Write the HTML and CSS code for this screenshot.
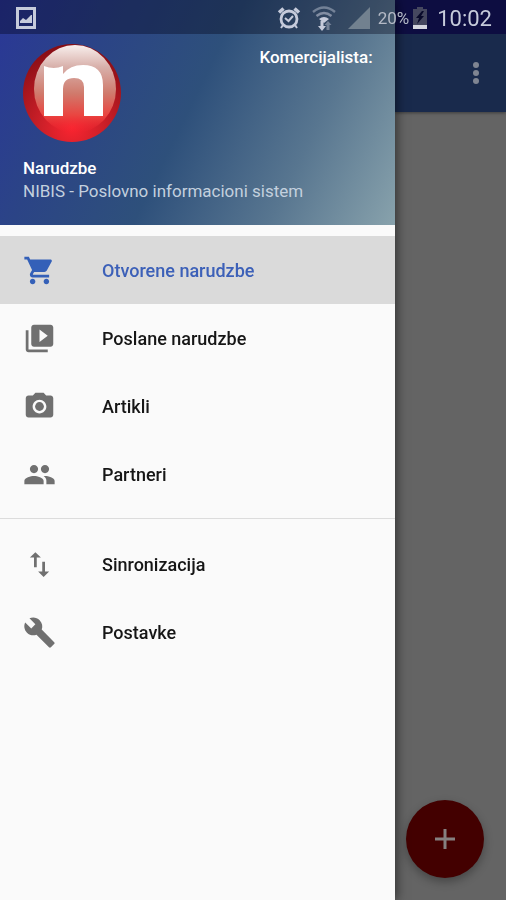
FILE: index.html
```html
<!DOCTYPE html>
<html lang="bs">
<head>
<meta charset="utf-8">
<meta name="viewport" content="width=device-width, initial-scale=1">
<title>Narudzbe</title>
<link rel="stylesheet" href="styles.css">
</head>
<body>
<div class="screen">
  <div class="status">
    <svg class="status-picture" viewBox="0 0 20 22" aria-hidden="true"><path fill="none" stroke="currentColor" stroke-width="3" d="M1.5 1.5h17v19h-17z"/><path fill="currentColor" d="M4 16v-2l3-3 3 2 5-5h1v8z"/></svg>
    <div class="status-right">
      <svg class="status-alarm" viewBox="0 0 24 24" aria-hidden="true"><g fill="none" stroke="currentColor"><circle cx="12" cy="13" r="8" stroke-width="2.800"/><path stroke-width="3.500" d="M2 6.500l4.500-4M22 6.500l-4.500-4"/><path stroke-width="2" d="M8 12l3.500 3 4.500-5M6 19l-2 3M18 19l2 3"/></g></svg>
      <svg class="status-wifi" viewBox="0 0 24 26" aria-hidden="true"><g fill="none" stroke="currentColor" stroke-width="2.400"><path opacity=".45" d="M1 7q11-9 22 0"/><path opacity=".55" d="M4.500 11q7.500-6 15 0"/></g><path fill="currentColor" d="M7 14q5-4 10 0l-5 4z"/><path fill="currentColor" d="M8.500 16h3v5h2.500l-4 5-4-5h2.500z"/><path fill="currentColor" opacity=".45" d="M14.500 25h3v-5h2l-3.500-4-3.500 4h2z"/></svg>
      <svg class="status-signal" viewBox="0 0 22 22" aria-hidden="true"><path fill="currentColor" d="M22 0v22H0z"/></svg>
      <span class="status-percent">20%</span>
      <svg class="status-battery" viewBox="0 0 16 22" aria-hidden="true"><path fill="#45475f" d="M5 0h6v2h4v16H1V2h4z"/><path fill="#d4d5df" d="M1 18h14v4H1z"/><path fill="#08092a" d="M10 4l-6 7h3l-2 6 7-8H9l3-5z"/></svg>
      <span class="status-time">10:02</span>
    </div>
  </div>

  <aside class="drawer">
    <header class="head">
      <div class="head-top">
        <svg class="logo" viewBox="0 0 100 100" role="img" aria-label="n">
          <defs>
            <radialGradient id="ball" cx=".5" cy=".85" r=".85"><stop offset="0" stop-color="#fa2430"/><stop offset=".35" stop-color="#cf2029"/><stop offset="1" stop-color="#850d14"/></radialGradient>
            <linearGradient id="shine" x1="0" y1="0" x2="0" y2="1"><stop offset="0" stop-color="#f8efed"/><stop offset=".25" stop-color="#d8b0aa"/><stop offset=".55" stop-color="#d07a6c"/><stop offset=".8" stop-color="#ea4440"/><stop offset="1" stop-color="#fa2430" stop-opacity="0"/></linearGradient>
          </defs>
          <circle cx="50" cy="50" r="49" fill="url(#ball)"/>
          <ellipse cx="53" cy="46" rx="41" ry="44" fill="url(#shine)"/>
          <path fill="#fff" d="M22 23q10 4 19 0v8q7-9 20-9 20 0 20 20v31H62V44q0-9-10-9-11 0-11 11v27H22z"/>
        </svg>
        <span class="agent">Komercijalista:</span>
      </div>
      <h1 class="title">Narudzbe</h1>
      <p class="subtitle">NIBIS - Poslovno informacioni sistem</p>
    </header>
    <nav class="menu">
      <div class="group">
        <a class="item active" href="#open" aria-current="page"><svg class="icon" viewBox="0 0 24 24" aria-hidden="true"><path d="M7 18c-1.100 0-1.990.9-1.990 2S5.900 22 7 22s2-.9 2-2-.9-2-2-2zM1 2v2h2l3.600 7.590-1.350 2.450c-.16.28-.25.61-.25.96 0 1.100.9 2 2 2h12v-2H7.420c-.14 0-.25-.11-.25-.25l.03-.12.9-1.630h7.450c.75 0 1.410-.41 1.750-1.030l3.580-6.490c.08-.14.12-.31.12-.48 0-.55-.45-1-1-1H5.210l-.94-2H1zm16 16c-1.100 0-1.990.9-1.990 2s.89 2 1.990 2 2-.9 2-2-.9-2-2-2z"/></svg>Otvorene narudzbe</a>
        <a class="item" href="#sent"><svg class="icon" viewBox="0 0 24 24" aria-hidden="true"><path d="M4 6H2v14c0 1.100.9 2 2 2h14v-2H4V6zm16-4H8c-1.100 0-2 .9-2 2v12c0 1.100.9 2 2 2h12c1.100 0 2-.9 2-2V4c0-1.100-.9-2-2-2zm-8 12.500v-9l6 4.500-6 4.500z"/></svg>Poslane narudzbe</a>
        <a class="item" href="#articles"><svg class="icon" viewBox="0 0 24 24" aria-hidden="true"><circle cx="12" cy="12" r="3.200"/><path d="M9 2L7.170 4H4c-1.100 0-2 .9-2 2v12c0 1.100.9 2 2 2h16c1.100 0 2-.9 2-2V6c0-1.100-.9-2-2-2h-3.170L15 2H9zm3 15c-2.760 0-5-2.240-5-5s2.240-5 5-5 5 2.240 5 5-2.240 5-5 5z"/></svg>Artikli</a>
        <a class="item" href="#partners"><svg class="icon" viewBox="0 0 24 24" aria-hidden="true"><path d="M16 11c1.660 0 2.990-1.340 2.990-3S17.660 5 16 5c-1.660 0-3 1.340-3 3s1.340 3 3 3zm-8 0c1.660 0 2.990-1.340 2.990-3S9.660 5 8 5C6.340 5 5 6.340 5 8s1.340 3 3 3zm0 2c-2.330 0-7 1.170-7 3.500V19h14v-2.500c0-2.330-4.670-3.500-7-3.500zm8 0c-.29 0-.62.020-.97.050 1.160.84 1.970 1.970 1.970 3.450V19h6v-2.500c0-2.330-4.670-3.500-7-3.500z"/></svg>Partneri</a>
      </div>
      <div class="group">
        <a class="item" href="#sync"><svg class="icon" viewBox="0 0 24 24" aria-hidden="true"><path d="M16 17.010V10h-2v7.010h-3L15 21l4-3.990h-3zM9 3L5 6.990h3V14h2V6.990h3L9 3z"/></svg>Sinronizacija</a>
        <a class="item" href="#settings"><svg class="icon" viewBox="0 0 24 24" aria-hidden="true"><path d="M22.700 19l-9.100-9.100c.9-2.300.4-5-1.500-6.900-2-2-5-2.400-7.400-1.300L9 6 6 9 1.600 4.700C.4 7.100.9 10.100 2.900 12.100c1.900 1.900 4.600 2.400 6.900 1.500l9.100 9.100c.4.4 1 .4 1.400 0l2.300-2.300c.5-.4.5-1.100.1-1.400z"/></svg>Postavke</a>
      </div>
    </nav>
  </aside>

  <main class="page">
    <div class="appbar">
      <button class="more" type="button" aria-label="Meni"><svg viewBox="0 0 8 24" aria-hidden="true"><circle cx="4" cy="4" r="3"/><circle cx="4" cy="12" r="3"/><circle cx="4" cy="20" r="3"/></svg></button>
    </div>
    <button class="fab" type="button" aria-label="Dodaj"><svg viewBox="0 0 20 20" aria-hidden="true"><path d="M10 0v20M0 10h20"/></svg></button>
  </main>
</div>
</body>
</html>
```
FILE: styles.css
```css
* {
  box-sizing: border-box;
}

body {
  margin: 0;
  font-family: Roboto, "Liberation Sans", sans-serif;
  font-size: 17px;
  line-height: 23px;
}

button {
  border: 0;
  padding: 0;
  background: none;
}

svg {
  display: block;
}

.screen {
  position: relative;
  display: flex;
  min-height: 100vh;
  background: #646464;
}

/* Translucent system bar over the drawer and the page */
.status {
  position: absolute;
  z-index: 3;
  inset: 0 0 auto;
  display: flex;
  align-items: center;
  justify-content: space-between;
  height: 34px;
  padding: 2px 14px 0 16px;
  background: rgba(0, 0, 20, 0.35);
  color: #c6cbdb;
}

.status-right {
  display: flex;
  align-items: center;
}

.status-picture {
  width: 20px;
  height: 22px;
}

.status-alarm {
  width: 24px;
  height: 24px;
  margin-right: 11px;
}

.status-wifi {
  width: 24px;
  height: 26px;
  margin-right: 12px;
}

.status-signal {
  width: 22px;
  height: 22px;
  margin-right: 8px;
  color: #72818f;
}

.status-percent {
  margin-right: 3px;
  font-size: 17px;
  color: #b4b9c6;
}

.status-battery {
  width: 16px;
  height: 22px;
  margin-right: 9px;
}

.status-time {
  font-size: 22px;
}

.drawer {
  z-index: 2;
  flex: 0 0 78%;
  background: #fafafa;
  box-shadow: 2px 0 10px rgba(0, 0, 0, 0.5);
}

.head {
  padding: 43px 22px 22px 22px;
  background: linear-gradient(116deg, #2a3797 0%, #2b4486 24%, #2e507b 48%, #587690 75%, #88a2ac 100%);
  color: #fff;
}

.head-top {
  display: flex;
  justify-content: space-between;
  margin-bottom: 14px;
}

.logo {
  width: 100px;
  height: 100px;
}

.agent,
.title {
  font-size: 17px;
  font-weight: 500;
}

.agent {
  line-height: 28px;
}

.title,
.subtitle {
  margin: 0 1px;
}

.subtitle {
  color: #c3d0de;
}

.group {
  padding: 11px 0 10px;
}

.group + .group {
  border-top: 1px solid #dcdcdc;
}

.item {
  display: flex;
  align-items: center;
  gap: 46px;
  height: 68px;
  padding: 0 23px;
  color: #161616;
  font-size: 18px;
  font-weight: 500;
  text-decoration: none;
}

.item.active {
  background: #dadada;
  color: #3c60b8;
}

.icon {
  width: 33px;
  height: 33px;
  fill: #707070;
}

.active .icon {
  fill: #3460b8;
}

.page {
  flex: 1;
  min-width: 0;
}

.appbar {
  display: flex;
  align-items: center;
  justify-content: flex-end;
  height: 112px;
  padding: 34px 22px 0 0;
  background: linear-gradient(#15155a 34px, #192a4c 34px);
  box-shadow: 0 1px 3px rgba(0, 0, 0, 0.4);
}

.more {
  width: 16px;
  height: 40px;
}

.more svg {
  width: 8px;
  height: 24px;
  margin: auto;
  fill: #7f8592;
}

.fab {
  position: fixed;
  right: 22px;
  bottom: 22px;
  display: grid;
  place-items: center;
  width: 78px;
  height: 78px;
  border-radius: 50%;
  background: #430000;
  box-shadow: 0 4px 10px rgba(0, 0, 0, 0.3);
}

.fab svg {
  width: 20px;
  height: 20px;
  fill: none;
  stroke: #858080;
  stroke-width: 3;
}
```
